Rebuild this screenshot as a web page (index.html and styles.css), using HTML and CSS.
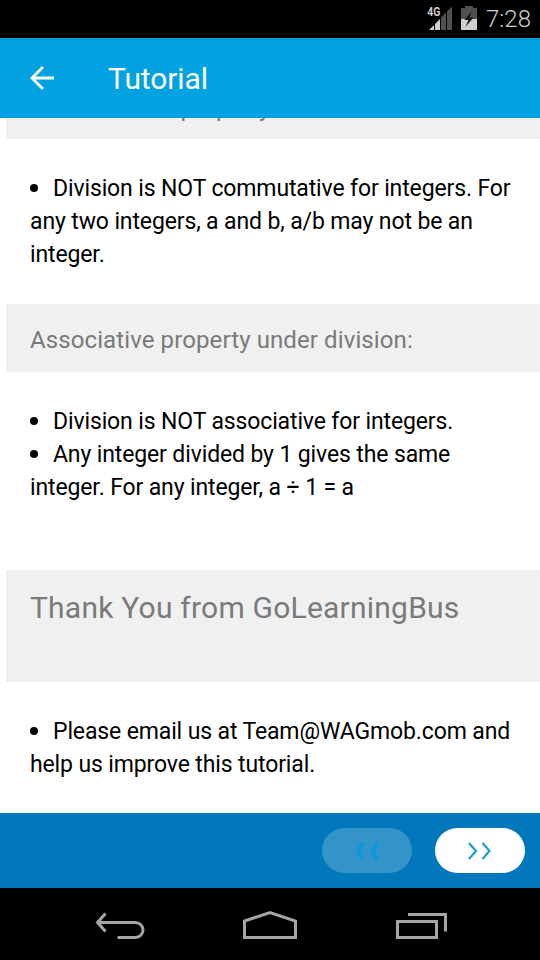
FILE: index.html
```html
<!DOCTYPE html>
<html lang="en">
<head>
    <meta charset="UTF-8">
    <meta name="viewport" content="width=device-width, initial-scale=1.0">
    <title>Tutorial</title>
    <link rel="stylesheet" href="styles.css">
</head>
<body>
    <div class="screen">
        <div class="status-bar">
            <div class="signal">
                <span class="network">4G</span>
                <svg width="24" height="24" viewBox="0 0 24 24">
                    <path fill="#505050" d="M12 11.5l5-5V24h-5zM18 5.500l5-5V24h-5z"/>
                    <path fill="#cfcfcf" d="M0 24l5-5v5zM6 18l5-5v11H6z"/>
                </svg>
            </div>
            <svg class="battery" width="16" height="24" viewBox="0 0 16 24">
                <path fill="#505050" d="M4 0h8v2h4v11H0V2h4z"/>
                <path fill="#cfcfcf" d="M0 13h16v11H0z"/>
                <path fill="#161616" d="M11 5L3.500 14h4l-3 7L12.500 11.500H8.500z"/>
            </svg>
            <span class="clock">7:28</span>
        </div>

        <div class="app-bar">
            <svg class="back" width="24" height="24" viewBox="0 0 24 24">
                <path fill="none" stroke="#fff" stroke-width="2.8" d="M13 1L2 12l11 11M2 12h22"/>
            </svg>
            <h1>Tutorial</h1>
        </div>

        <div class="content">
            <h3>Commutative property under division:</h3>
            <ul>
                <li>Division is NOT commutative for integers. For<br>any two integers, a and b, a/b may not be an<br>integer.</li>
            </ul>

            <h3>Associative property under division:</h3>
            <ul class="last">
                <li>Division is NOT associative for integers.</li>
                <li>Any integer divided by 1 gives the same<br>integer. For any integer, a ÷ 1 = a</li>
            </ul>

            <h2>Thank You from GoLearningBus</h2>
            <ul>
                <li>Please email us at Team@WAGmob.com and<br>help us improve this tutorial.</li>
            </ul>
        </div>

        <div class="pager">
            <div class="pager-btn disabled">
                <svg width="24" height="18" viewBox="0 0 24 18">
                    <path fill="none" stroke="#0b98d8" stroke-width="3.800" d="M8 1L3 9l5 8M22 1l-5 8 5 8"/>
                </svg>
            </div>
            <div class="pager-btn">
                <svg width="24" height="18" viewBox="0 0 24 18">
                    <path fill="none" stroke="#1a9fd8" stroke-width="2.200" d="M1 1l7 8-7 8M14.500 1l7 8-7 8"/>
                </svg>
            </div>
        </div>

        <div class="nav-bar">
            <svg width="52" height="32" viewBox="0 0 52 32">
                <path fill="none" stroke="#a5a5a5" stroke-width="3" d="M12.500 3.500L4.500 12.500l8 9M4.500 12.500h38a7.500 7.500 0 0 1 0 15H24.500"/>
            </svg>
            <svg width="56" height="32" viewBox="0 0 56 32">
                <path fill="none" stroke="#a5a5a5" stroke-width="3" d="M2.500 11L28 2.500 53.500 11v16.500h-51z"/>
            </svg>
            <svg width="52" height="32" viewBox="0 0 52 32">
                <path fill="none" stroke="#a5a5a5" stroke-width="3" d="M2.500 11.500h39v16h-39zM13 4.500h37.500V21.500"/>
            </svg>
        </div>
    </div>
</body>
</html>
```
FILE: styles.css
```css
* {
    margin: 0;
    padding: 0;
    box-sizing: border-box;
}

body {
    font-family: Roboto, sans-serif;
    background: #fff;
    color: #000;
}

.screen {
    width: 540px;
    height: 960px;
    display: flex;
    flex-direction: column;
    overflow: hidden;
}

svg {
    display: block;
    flex: none;
}

.status-bar {
    height: 38px;
    flex: none;
    display: flex;
    align-items: center;
    justify-content: flex-end;
    padding-right: 9px;
    background: #000;
}

.signal {
    display: flex;
    align-items: flex-start;
    margin-top: -2px;
    margin-right: 8px;
}

.signal svg {
    margin-left: -12px;
}

.network {
    font-size: 13px;
    line-height: 12px;
    font-weight: 700;
    color: #cfcfcf;
    transform: scaleX(0.8);
    transform-origin: right;
    margin-right: 1px;
}

.battery {
    margin-top: -2px;
    margin-right: 9px;
}

.clock {
    font-size: 24px;
    font-weight: 300;
    line-height: 38px;
    color: #d0d0d0;
}

.app-bar {
    height: 80px;
    flex: none;
    display: flex;
    align-items: center;
    padding-left: 30px;
    background: linear-gradient(#0497d6, #02a1e2 4px);
    color: #fff;
}

.app-bar h1 {
    margin-left: 54px;
    font-size: 30px;
    font-weight: 400;
    letter-spacing: -0.1px;
}

.content {
    height: 695px;
    flex: none;
    overflow: hidden;
    white-space: nowrap;
}

.content h2,
.content h3 {
    margin-left: 6px;
    padding-left: 24px;
    background: #f0f0f0;
    color: #7a7a7a;
    font-weight: 400;
}

.content h2 {
    height: 112.5px;
    padding-top: 20px;
    font-size: 30px;
    line-height: 36px;
    letter-spacing: 0.22px;
}

.content h3 {
    height: 67.5px;
    padding-top: 21px;
    font-size: 24px;
    line-height: 30px;
    letter-spacing: 0.1px;
}

.content h3:first-child {
    margin-top: -46.5px;
}

.content ul {
    list-style: none;
    padding: 33px 0 33px 30px;
}

.content ul.last {
    padding-bottom: 66px;
}

.content li {
    font-size: 23px;
    line-height: 33px;
    letter-spacing: -0.13px;
}

.content li::before {
    content: '';
    display: inline-block;
    width: 8px;
    height: 8px;
    margin-right: 15px;
    border-radius: 50%;
    background: #000;
    vertical-align: 4px;
}

.pager {
    height: 75px;
    flex: none;
    display: flex;
    align-items: center;
    justify-content: flex-end;
    gap: 23px;
    padding-right: 15px;
    background: #0078bb;
}

.pager-btn {
    width: 90px;
    height: 45px;
    display: flex;
    align-items: center;
    justify-content: center;
    border-radius: 23px;
    background: #fff;
}

.pager-btn.disabled {
    background: #3394c9;
}

.nav-bar {
    height: 72px;
    flex: none;
    display: flex;
    align-items: center;
    justify-content: space-between;
    padding: 3px 93px 0 93px;
    background: #000;
}
```
